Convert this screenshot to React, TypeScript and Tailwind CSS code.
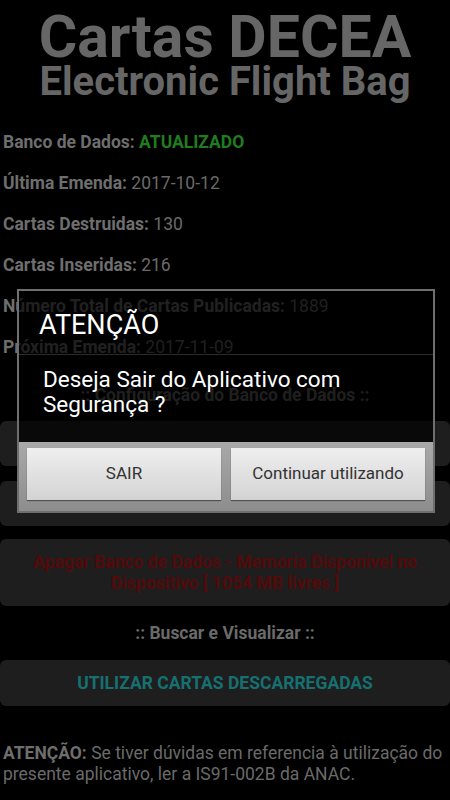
import React from "react";

const infoRows = [
  { label: "Banco de Dados:", value: "ATUALIZADO", ok: true },
  { label: "Última Emenda:", value: "2017-10-12" },
  { label: "Cartas Destruidas:", value: "130" },
  { label: "Cartas Inseridas:", value: "216" },
  { label: "Número Total de Cartas Publicadas:", value: "1889" },
  { label: "Próxima Emenda:", value: "2017-11-09" },
];

function DialogButton({ children }: { children: React.ReactNode }) {
  return (
    <button className="h-[52px] w-[194px] bg-gradient-to-b from-[#efefef] to-[#d3d3d3] text-[17px] text-[#333] shadow-[0_1px_1px_rgba(0,0,0,0.45)]">
      {children}
    </button>
  );
}

export default function App() {
  return (
    <div className="relative h-[800px] w-[450px] overflow-hidden bg-black font-['Roboto',sans-serif]">
      {/* header */}
      <div className="pt-[7px] text-center font-bold text-[#666]">
        <h1 className="text-[59px] leading-[59px]">Cartas DECEA</h1>
        <h2 className="-mt-[1px] text-[40px] leading-[34px]">Electronic Flight Bag</h2>
      </div>

      {/* status of the database */}
      <div className="mt-[23px] pl-[3px] text-[17.5px]">
        {infoRows.map((row) => (
          <p key={row.label} className="leading-[41px] text-[#6a6a6a]">
            <span className="font-bold text-[#6e6e6e]">{row.label}</span>{" "}
            <span className={row.ok ? "font-bold text-[#1f7d1f]" : ""}>{row.value}</span>
          </p>
        ))}
      </div>

      <p className="mt-[15px] text-center text-[17.5px] font-bold leading-[24px] text-[#6a6a6a]">
        :: Configuração do Banco de Dados ::
      </p>

      <div className="mt-[14px] flex flex-col gap-[15px]">
        <button className="flex h-[45px] w-full items-center justify-center rounded-md bg-[#1e1e1e] pt-[14px] text-[17px] font-bold text-[#2a2a2a]">
          ATUALIZAR BANCO DE DADOS
        </button>
        <button className="flex h-[45px] w-full items-center justify-center rounded-md bg-[#1e1e1e] text-[17px] font-bold text-[#2a2a2a]">
          VERIFICAR EMENDAS
        </button>
      </div>

      <button className="mt-[13px] flex h-[67px] w-full items-center justify-center rounded-md bg-[#1e1e1e] px-6 text-center text-[17.5px] font-bold leading-[21px] text-[#520a0a]">
        Apagar Banco de Dados - Memoria Disponivel no Dispositivo [ 1054 MB livres ]
      </button>

      <p className="mt-[15px] text-center text-[17.5px] font-bold leading-[24px] text-[#6a6a6a]">
        :: Buscar e Visualizar ::
      </p>

      <button className="mt-[15px] flex h-[46px] w-full items-center justify-center rounded-md bg-[#1e1e1e] text-[17.5px] font-bold text-[#177070]">
        UTILIZAR CARTAS DESCARREGADAS
      </button>

      <p className="mt-[37px] pl-[3px] pr-[2px] text-[17.5px] leading-[21px] text-[#6a6a6a]">
        <span className="font-bold text-[#6e6e6e]">ATENÇÃO:</span> Se tiver dúvidas em referencia à utilização do
        presente aplicativo, ler a IS91-002B da ANAC.
      </p>

      {/* exit dialog */}
      <div className="absolute left-[17px] top-[289px] w-[418px] border-2 border-[#6f6f6f] bg-black/70">
        <div className="h-[63px] pl-[20px] pt-[21px] text-[27px] leading-[27px] text-white">ATENÇÃO</div>
        <div className="h-px bg-[#2c2c2c]" />
        <div className="h-[87px] pl-[24px] pr-[30px] pt-[12px] text-[22.5px] leading-[25px] text-white">
          Deseja Sair do Aplicativo com Segurança ?
        </div>
        <div className="flex h-[69px] gap-[10px] bg-gradient-to-b from-[#a9a9a9] to-[#8d8d8d] px-[8px] pt-[6px]">
          <DialogButton>SAIR</DialogButton>
          <DialogButton>Continuar utilizando</DialogButton>
        </div>
      </div>
    </div>
  );
}
